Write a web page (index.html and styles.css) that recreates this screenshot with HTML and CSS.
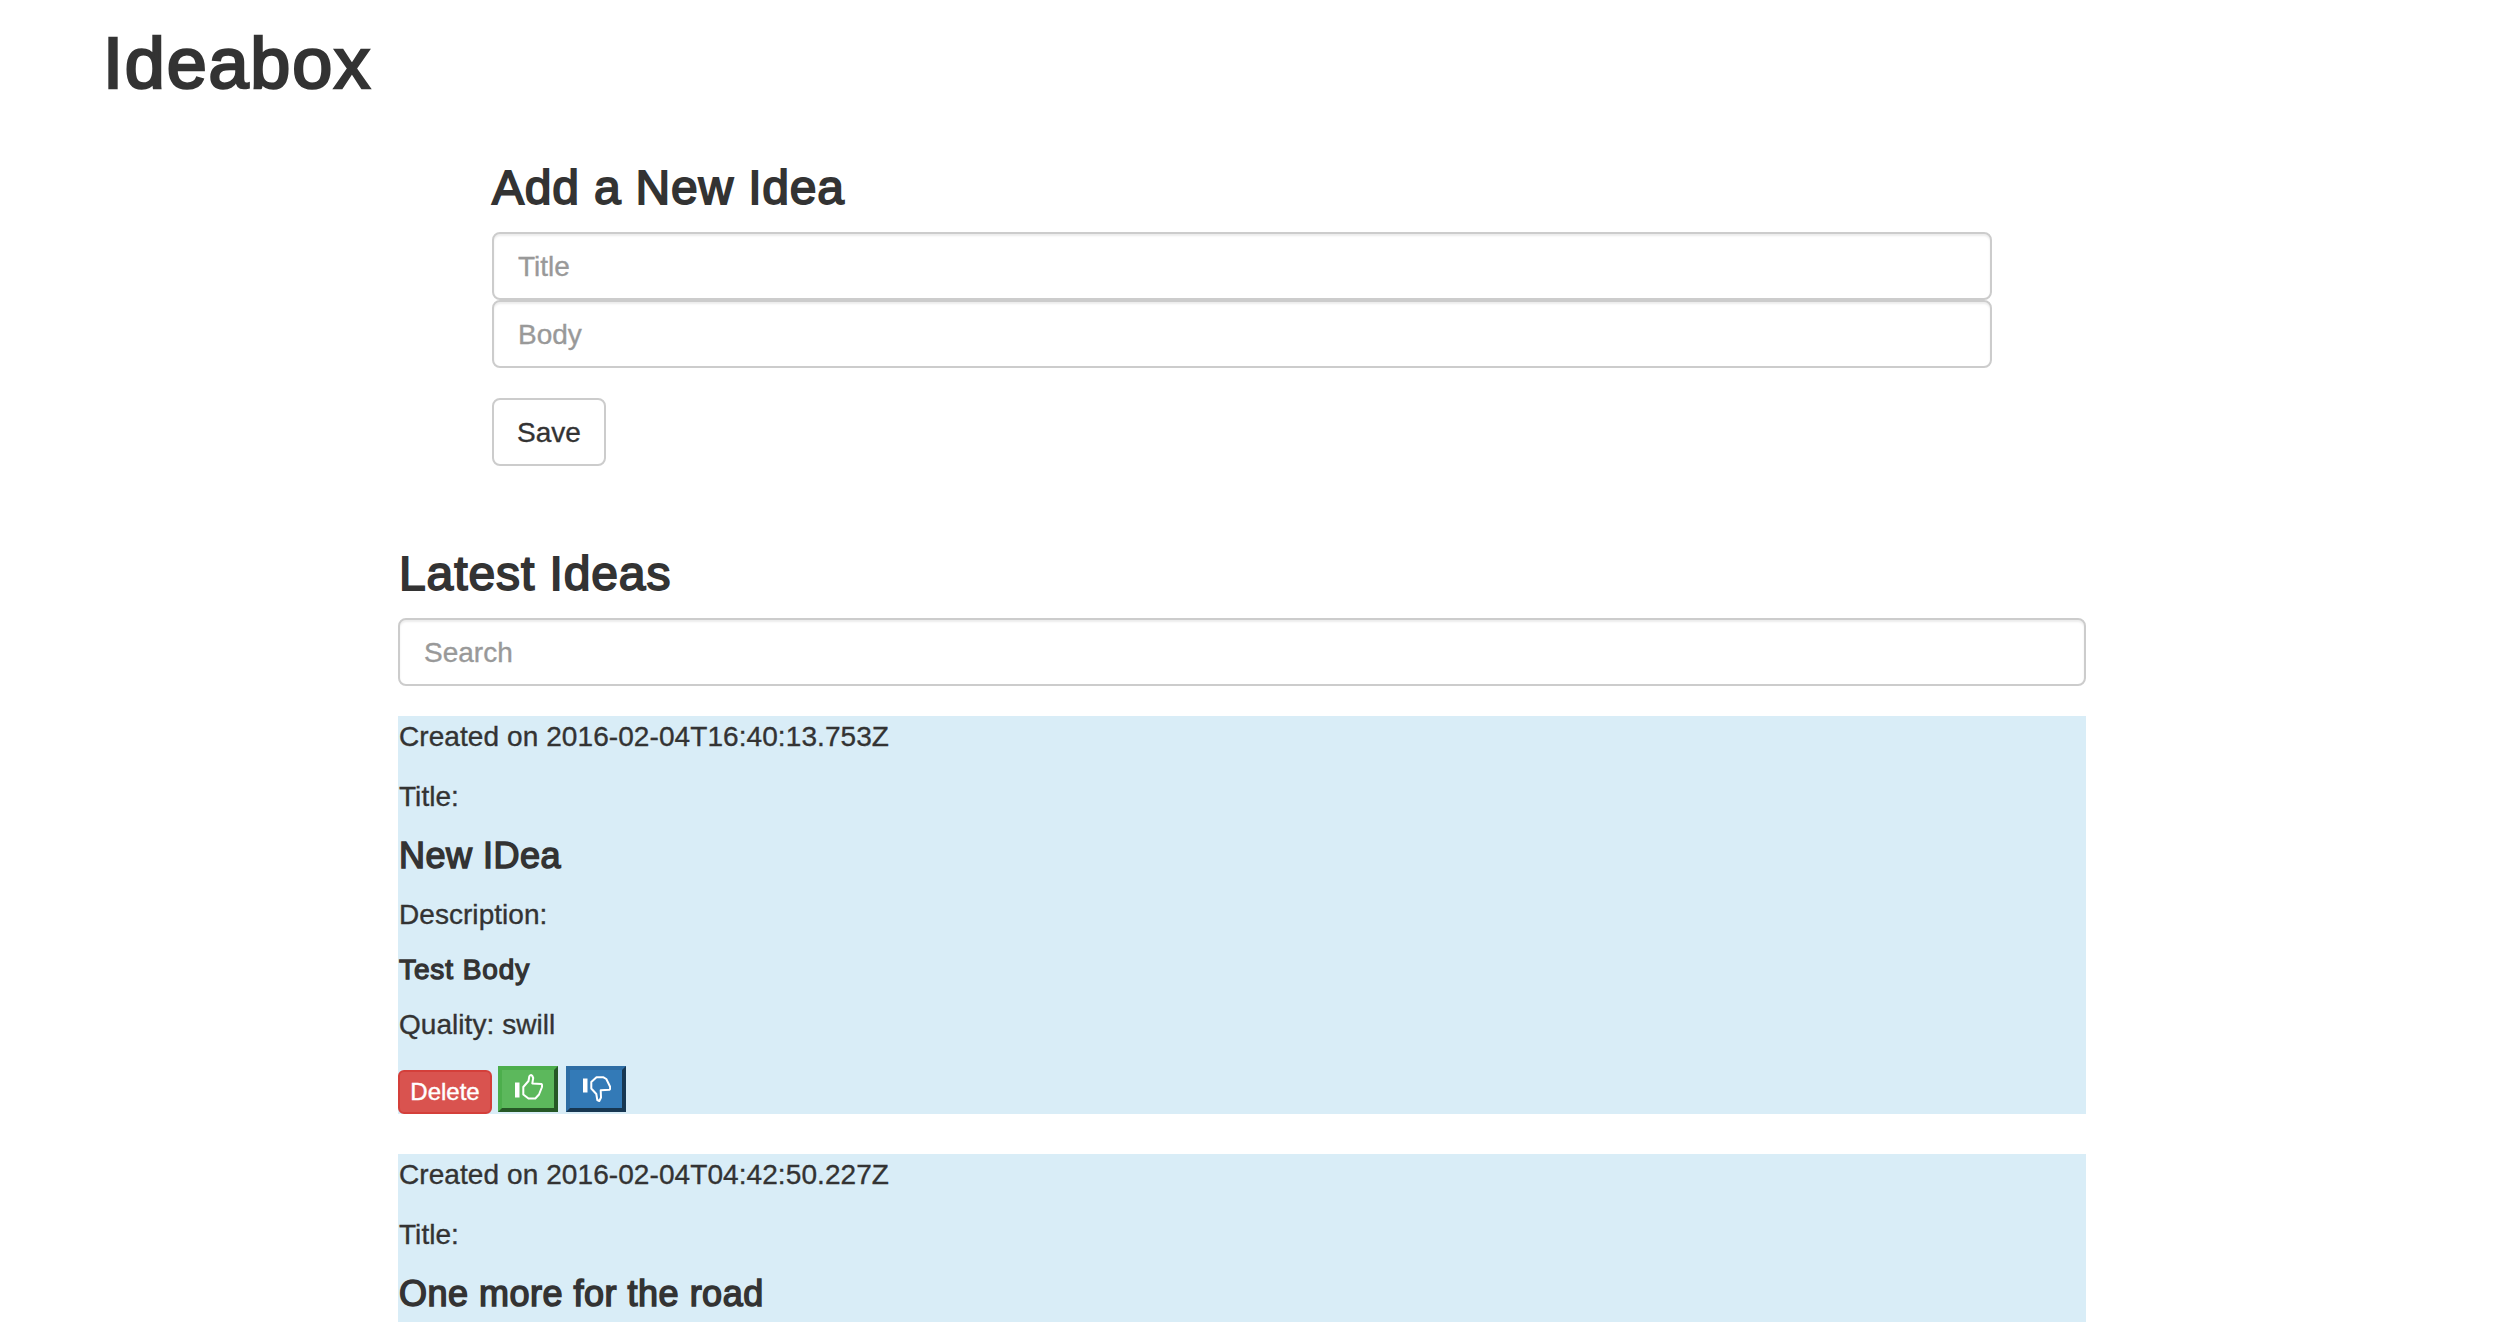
FILE: index.html
```html
<!DOCTYPE html>
<html lang="en">
<head>
<meta charset="utf-8">
<title>Ideabox</title>
<link rel="stylesheet" href="styles.css">
</head>
<body>
<header class="site-header"><h1 class="brand">Ideabox</h1></header>
<main class="content">
  <form class="idea-form">
    <h3 class="section-title form-title">Add a New Idea</h3>
    <input class="field" type="text" placeholder="Title">
    <input class="field" type="text" placeholder="Body">
    <button class="save" type="button">Save</button>
  </form>
  <section class="ideas">
    <h3 class="section-title list-title">Latest Ideas</h3>
    <input class="field search" type="text" placeholder="Search">
    <article class="idea">
      <p class="line created">Created on 2016-02-04T16:40:13.753Z</p>
      <p class="line">Title:</p>
      <h4 class="idea-title">New IDea</h4>
      <p class="line">Description:</p>
      <h5 class="idea-body">Test Body</h5>
      <p class="line">Quality: swill</p>
      <div class="actions">
        <button class="delete" type="button">Delete</button>
        <button class="vote up" type="button" aria-label="Thumbs up">
          <svg class="thumb" viewBox="0 0 28 28"><path class="cuff" d="M0 8.500h4.500v15H0z"/><path class="hand" d="M8.300 13L13.500 7L14.300 2.500Q15.500 0 17.300 2L18.200 4L17.300 9.500L26.500 10Q27.500 11 26.800 13.500L24 20.500L20.300 24.500H13.500L8.300 20.500z"/></svg>
        </button>
        <button class="vote down" type="button" aria-label="Thumbs down">
          <svg class="thumb" viewBox="0 0 28 28"><path class="cuff" d="M0 4.500h4.500v14H0z"/><path class="hand" d="M8.300 8L13.500 3.300H20.500L23.300 5L27 12.500Q27.500 15 26.500 15.700L17.700 16.300L18 23.500L16.300 27L14.300 26L13.300 20L8.300 14.500z"/></svg>
        </button>
      </div>
    </article>
    <article class="idea idea-last">
      <p class="line created">Created on 2016-02-04T04:42:50.227Z</p>
      <p class="line">Title:</p>
      <h4 class="idea-title">One more for the road</h4>
    </article>
  </section>
</main>
</body>
</html>
```

FILE: styles.css
```css
* { box-sizing: border-box; }

body {
  margin: 0;
  background: #fff;
  color: #333;
  font: 28px/40px "Liberation Sans", Arial, sans-serif;
  -webkit-text-stroke: .35px;
}

h1, h3, h4, h5, p { margin: 0; }

.site-header { padding: 22px 102px 0; height: 162px; }

.brand {
  font-size: 72px;
  line-height: 82px;
  font-weight: 400;
  letter-spacing: 1.8px;
  text-indent: 1px;
  -webkit-text-stroke: 2.6px #333;
}

.content { width: 1688px; margin-left: 398px; }

.idea-form { padding: 0 94px; height: 386px; }

.section-title {
  font-size: 48px;
  line-height: 52px;
  height: 70px;
  font-weight: 400;
  letter-spacing: .8px;
  -webkit-text-stroke: 1.8px #333;
}

.list-title { text-indent: 1px; letter-spacing: .9px; }

.field {
  display: block;
  width: 100%;
  height: 68px;
  padding: 13px 24px 11px;
  border: 2px solid #ccc;
  border-radius: 8px;
  background: #fff;
  box-shadow: inset 0 2px 2px rgba(0, 0, 0, .075);
  font: inherit;
  -webkit-text-stroke: .35px;
}

.field::placeholder { color: #999; opacity: 1; }

.save {
  display: block;
  width: 114px;
  height: 68px;
  margin-top: 30px;
  padding: 1px 0 0;
  border: 2px solid #ccc;
  border-radius: 8px;
  background: #fff;
  color: #333;
  font: inherit;
  -webkit-text-stroke: .35px;
}

.search { margin-bottom: 30px; }

.idea {
  height: 398px;
  margin-bottom: 40px;
  padding: 1px 0 0 1px;
  background: #d9edf7;
}

.idea-last { height: 168px; margin-bottom: 0; }

.line { margin-bottom: 20px; letter-spacing: .05px; }

.created { letter-spacing: .08px; }

.idea-title {
  font-size: 36px;
  line-height: 38px;
  margin-bottom: 20px;
  font-weight: 400;
  letter-spacing: .5px;
  -webkit-text-stroke: 1.5px #333;
}

.idea-body {
  font-size: 28px;
  line-height: 30px;
  margin-bottom: 20px;
  font-weight: 400;
  letter-spacing: .9px;
  -webkit-text-stroke: 1.3px #333;
}

.actions { display: flex; align-items: flex-start; margin-left: -1px; padding-top: 1px; }

.delete {
  width: 94px;
  height: 44px;
  margin: 4px 6px 0 0;
  padding: 0;
  border: 2px solid #d43f3a;
  border-radius: 6px;
  background: #d9534f;
  color: #fff;
  font: 24px/36px "Liberation Sans", Arial, sans-serif;
  -webkit-text-stroke: .4px;
}

.vote {
  display: flex;
  width: 60px;
  height: 46px;
  margin-right: 8px;
  padding: 4px 0 0 13px;
  border: 4px solid;
}

.up { background: #5cb85c; border-color: #4cae4c #265826 #265826 #4cae4c; }
.down { background: #337ab7; border-color: #2e6da4 #173752 #173752 #2e6da4; }

.thumb { width: 28px; height: 28px; }
.cuff { fill: #fff; }
.hand { fill: none; stroke: #fff; stroke-width: 2; stroke-linejoin: round; }
```
